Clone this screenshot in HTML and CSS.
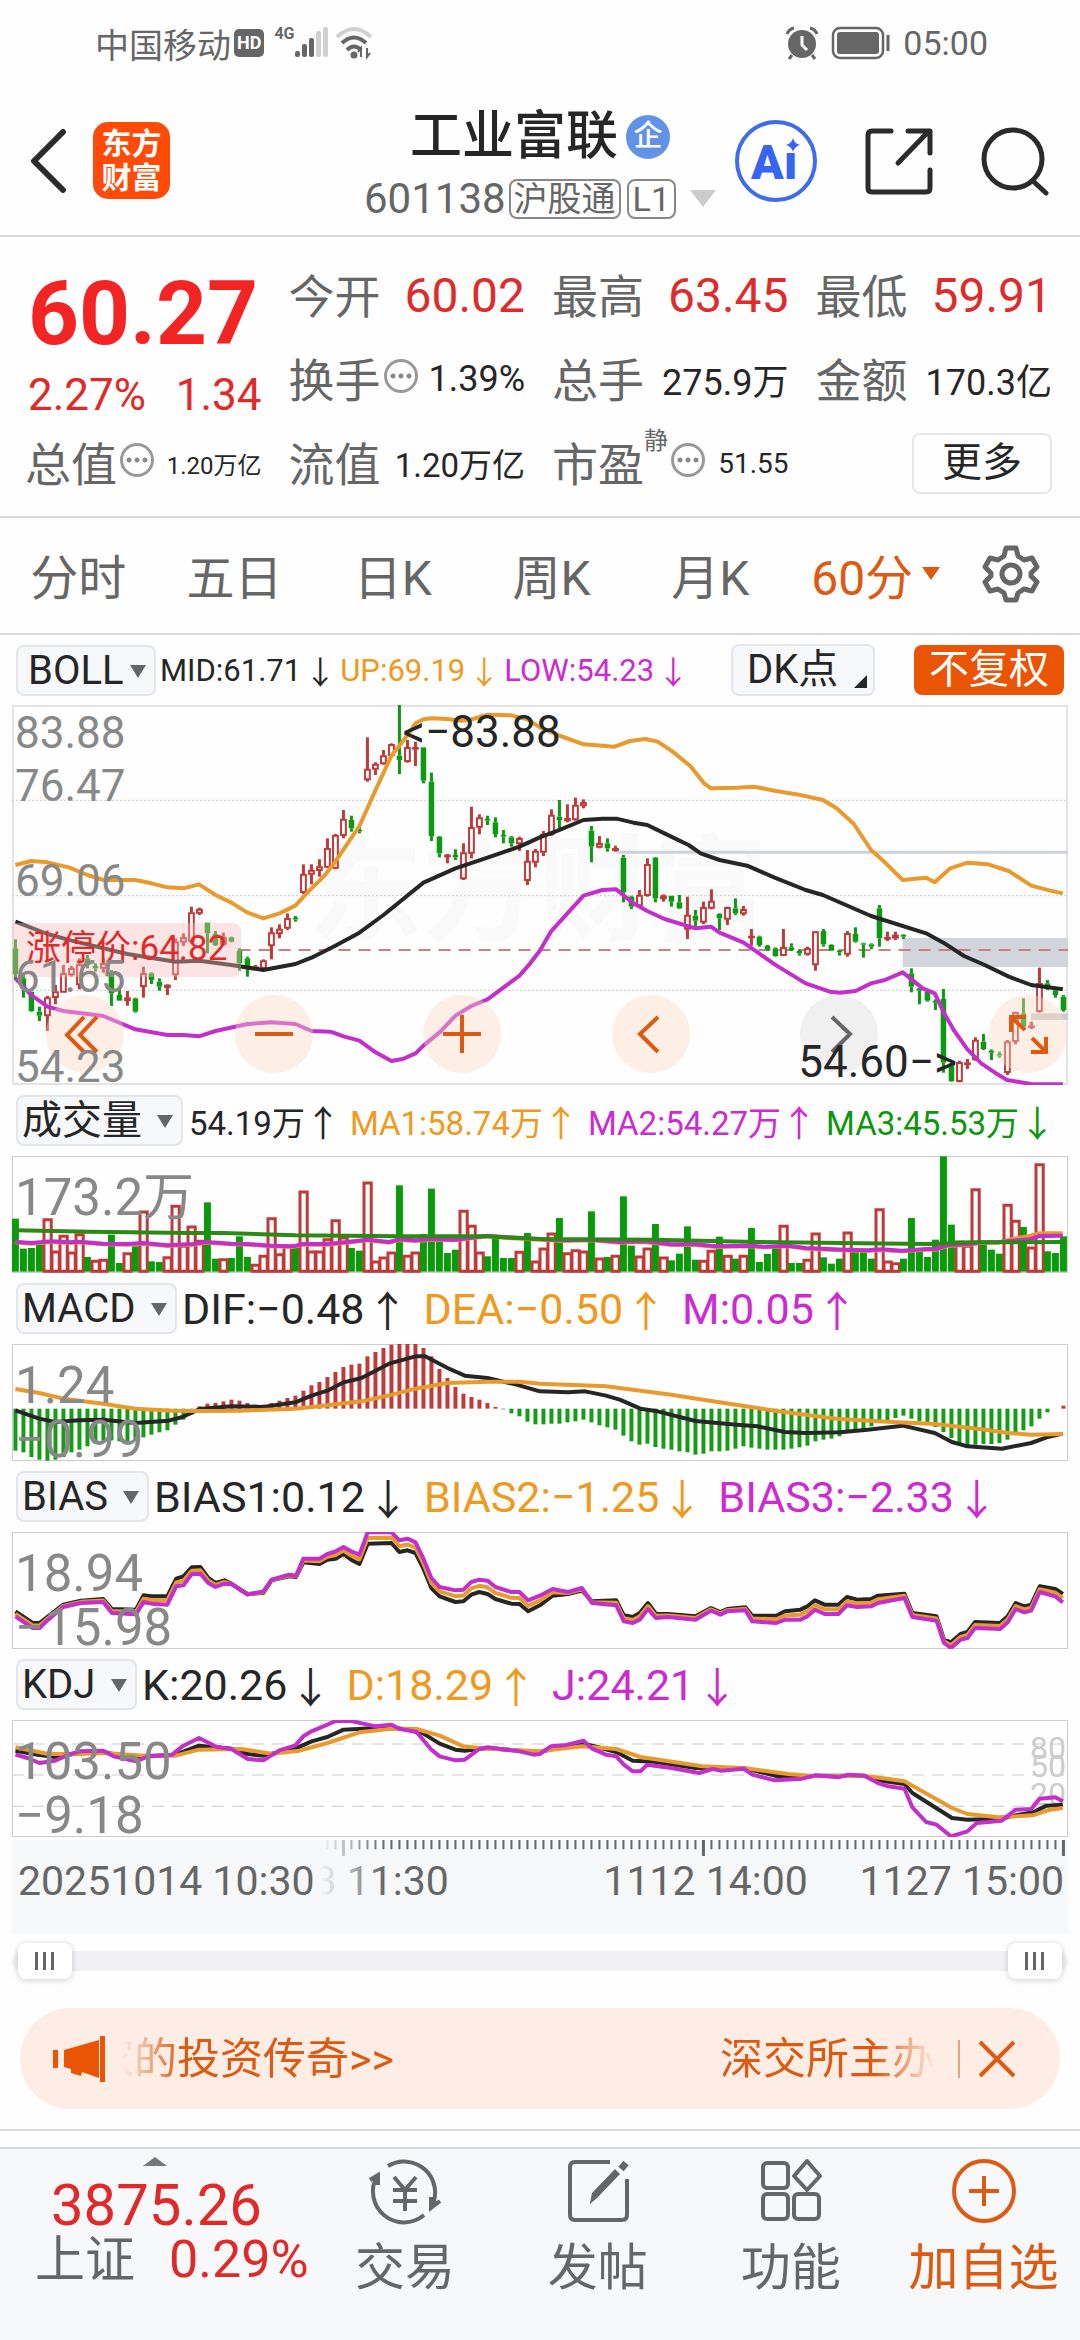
FILE: index.html
```html
<!DOCTYPE html>
<html lang="zh-CN">
<head>
<meta charset="utf-8">
<meta name="viewport" content="width=device-width, initial-scale=1">
<title>工业富联 601138</title>
<link rel="stylesheet" href="styles.css">
</head>
<body>
<div class="status">
  <div class="status-side">
    <span>中国移动</span>
    <span class="hd">HD</span>
    <span class="net">4G</span>
    <svg class="signal" width="34" height="36" viewBox="0 0 34 36"><g fill="#666"><rect x="0" y="26" width="5" height="6" rx="2"/><rect x="7" y="19" width="5" height="13" rx="2"/><rect x="14" y="13" width="5" height="19" rx="2"/></g><g fill="#d0d0d0"><rect x="21" y="6" width="5" height="26" rx="2"/><rect x="28" y="2" width="5" height="30" rx="2"/></g></svg>
    <svg width="38" height="34" viewBox="0 0 38 34" fill="none" stroke-width="4"><path d="M2 11Q19-5 36 11" stroke="#d0d0d0"/><path d="M7 17Q19 6 31 17" stroke="#666"/><path d="M12 24Q19 17 26 24" stroke="#666"/><circle cx="19" cy="29" r="3.500" fill="#666"/><path d="M26 31v-9l-3 4M32 22v9l3-4" stroke="#666" stroke-width="2"/></svg>
  </div>
  <div class="status-side">
    <svg width="34" height="34" viewBox="0 0 34 34"><circle cx="17" cy="18" r="14" fill="#666"/><path d="M2 8Q4 3 9 2M32 8Q30 3 25 2M7 29l-3 4M27 29l3 4" stroke="#666" stroke-width="3" fill="none"/><path d="M17 10v9l5 5" stroke="#fff" stroke-width="3" fill="none"/></svg>
    <svg class="battery" width="60" height="34" viewBox="0 0 60 34"><rect x="2" y="2" width="50" height="30" rx="7" fill="none" stroke="#666" stroke-width="2.500"/><rect x="6" y="6" width="42" height="22" rx="3" fill="#666"/><path d="M57 9v16" stroke="#666" stroke-width="3"/></svg>
    <span>05:00</span>
  </div>
</div>

<header class="top">
  <div class="top-left">
    <button class="icon-btn" aria-label="返回"><svg width="38" height="66" viewBox="0 0 38 66" fill="none" stroke="#2b2b2b" stroke-width="6" stroke-linecap="round" stroke-linejoin="round"><path d="M33 4L4 33l29 29"/></svg></button>
    <a class="logo" href="#home"><span>东方</span><span>财富</span></a>
  </div>
  <div class="titles">
    <h1>工业富联<span class="corp">企</span></h1>
    <div class="code"><span>601138</span><span class="tag">沪股通</span><span class="tag tag-level">L1</span><i class="caret"></i></div>
  </div>
  <div class="top-right">
    <button class="ai" aria-label="Ai">Aı<svg width="14" height="14" viewBox="0 0 14 14"><path d="M7 0Q8.500 5.500 14 7Q8.500 8.500 7 14Q5.500 8.500 0 7Q5.500 5.500 7 0Z" fill="#3864f4"/></svg></button>
    <button class="icon-btn" aria-label="分享"><svg width="68" height="68" viewBox="0 0 68 68" fill="none" stroke="#2b2b2b" stroke-width="5" stroke-linecap="round" stroke-linejoin="round"><path d="M26 4H7Q3 4 3 8V61Q3 65 7 65H61Q65 65 65 61V43M33 36L63 5M43 4H65V26"/></svg></button>
    <button class="icon-btn" aria-label="搜索"><svg width="68" height="70" viewBox="0 0 68 70" fill="none" stroke="#2b2b2b" stroke-width="5" stroke-linecap="round"><circle cx="32" cy="33" r="29"/><path d="M52 55L65 67"/></svg></button>
  </div>
</header>

<section class="quote">
  <div class="last">
    <strong>60.27</strong>
    <div><span>2.27%</span><span>1.34</span></div>
  </div>
  <div class="cell"><span>今开</span><b class="up">60.02</b></div>
  <div class="cell"><span>最高</span><b class="up">63.45</b></div>
  <div class="cell"><span>最低</span><b class="up">59.91</b></div>
  <div class="cell"><span>换手</span><i class="more-dot"></i><b>1.39%</b></div>
  <div class="cell"><span>总手</span><b>275.9万</b></div>
  <div class="cell"><span>金额</span><b>170.3亿</b></div>
  <div class="cell"><span>总值</span><i class="more-dot"></i><b class="tiny">1.20万亿</b></div>
  <div class="cell"><span>流值</span><b class="mid">1.20万亿</b></div>
  <div class="cell"><span>市盈</span><sup>静</sup><i class="more-dot"></i><b class="small">51.55</b></div>
  <div class="cell cell-end"><button class="more">更多</button></div>
</section>

<nav class="tabs">
  <button>分时</button><button>五日</button><button>日K</button><button>周K</button><button>月K</button>
  <button class="on">60分<i></i></button>
  <button class="icon-btn" aria-label="设置"><svg width="58" height="58" viewBox="0 0 58 58" fill="none" stroke="#666" stroke-width="5" stroke-linejoin="round"><path d="M24 3h10l2 8 6 4 8-2 5 9-6 6v3l6 6-5 9-8-2-6 4-2 7H24l-2-7-6-4-8 2-5-9 6-6v-3l-6-6 5-9 8 2 6-4Z"/><circle cx="29" cy="29" r="9"/></svg></button>
</nav>

<main>
  <div class="bar bar-main">
    <label class="pick pick-main"><select aria-label="主图指标"><option>BOLL</option></select></label>
    <span class="val">MID:61.71<i>↓</i></span>
    <span class="val c-or">UP:69.19<i>↓</i></span>
    <span class="val c-pu">LOW:54.23<i>↓</i></span>
    <button class="dk">DK点</button>
    <button class="adjust">不复权</button>
  </div>
  <div class="panel panel-main">
    <span class="watermark">东方财富</span>
    <svg class="plot" id="kline" viewBox="35 225 3067 1140" preserveAspectRatio="none"></svg>
    <span class="limit">涨停价:64.82</span>
    <div class="tools">
      <button aria-label="最早"><svg viewBox="0 0 78 78"><path d="M38 22L21 40l17 17M51 22L34 40l17 17"/></svg></button>
      <button aria-label="缩小"><svg viewBox="0 0 78 78"><path d="M20 39h38"/></svg></button>
      <button aria-label="放大"><svg viewBox="0 0 78 78"><path d="M20 39h38M39 20v38"/></svg></button>
      <button aria-label="向左"><svg viewBox="0 0 78 78"><path d="M46 22L28 39l18 18"/></svg></button>
      <button class="off" aria-label="向右"><svg viewBox="0 0 78 78"><path d="M32 22l18 17-18 18"/></svg></button>
      <button aria-label="全屏"><svg viewBox="0 0 78 78"><path d="M22 37V22h15M22 22l14 13M57 42v15H42M57 57L43 43"/></svg></button>
    </div>
    <span class="scale s1">83.88</span><span class="scale s2">76.47</span><span class="scale s3">69.06</span><span class="scale s4">61.65</span><span class="scale s5">54.23</span>
    <span class="mark mark-high">&lt;−83.88</span>
    <span class="mark mark-low">54.60−&gt;</span>
  </div>

  <div class="bar bar-vol">
    <label class="pick"><select aria-label="副图一"><option>成交量</option></select></label>
    <span class="val">54.19万<i>↑</i></span>
    <span class="val c-or">MA1:58.74万<i>↑</i></span>
    <span class="val c-pu">MA2:54.27万<i>↑</i></span>
    <span class="val c-gr">MA3:45.53万<i>↓</i></span>
  </div>
  <div class="panel">
    <svg class="plot" id="volume" viewBox="35 199 3067 351" preserveAspectRatio="none"></svg>
    <span class="scale big b1">173.2万</span>
  </div>

  <div class="bar">
    <label class="pick"><select aria-label="副图二"><option>MACD</option></select></label>
    <span class="val">DIF:−0.48<i>↑</i></span>
    <span class="val c-or">DEA:−0.50<i>↑</i></span>
    <span class="val c-pu">M:0.05<i>↑</i></span>
  </div>
  <div class="panel">
    <svg class="plot" id="macd" viewBox="35 763 3067 351" preserveAspectRatio="none"></svg>
    <span class="scale big b1">1.24</span><span class="scale big b2">−0.99</span>
  </div>

  <div class="bar">
    <label class="pick"><select aria-label="副图三"><option>BIAS</option></select></label>
    <span class="val">BIAS1:0.12<i>↓</i></span>
    <span class="val c-or">BIAS2:−1.25<i>↓</i></span>
    <span class="val c-pu">BIAS3:−2.33<i>↓</i></span>
  </div>
  <div class="panel">
    <svg class="plot" id="bias" viewBox="35 217 3067 351" preserveAspectRatio="none"></svg>
    <span class="scale big b1">18.94</span><span class="scale big b2">−15.98</span>
  </div>

  <div class="bar">
    <label class="pick"><select aria-label="副图四"><option>KDJ</option></select></label>
    <span class="val">K:20.26<i>↓</i></span>
    <span class="val c-or">D:18.29<i>↑</i></span>
    <span class="val c-pu">J:24.21<i>↓</i></span>
  </div>
  <div class="panel">
    <span class="level l1">80</span><span class="level l2">50</span><span class="level l3">20</span>
    <svg class="plot" id="kdj" viewBox="35 781 3067 351" preserveAspectRatio="none"></svg>
    <span class="scale big b1">103.50</span><span class="scale big b2">−9.18</span>
  </div>

  <div class="axis">
    <svg id="ticks" viewBox="35 0 3067 48" preserveAspectRatio="none"></svg>
    <span class="time t1">1023 11:30</span>
    <span class="time t2">1112 14:00</span>
    <span class="time t3">1127 15:00</span>
    <span class="time t0">20251014 10:30</span>
  </div>

  <div class="range">
    <input type="range" min="0" max="131" value="0" aria-label="起点">
    <input type="range" min="0" max="131" value="131" aria-label="终点">
  </div>
</main>

<aside class="notice">
  <svg width="54" height="46" viewBox="0 0 54 46" fill="#e95504"><path d="M0 14h5v18H0zM11 14L46 4V42L29 36 28 40 18 37 18 33 11 31ZM47 0h5v46h-5z"/></svg>
  <div class="ticker"><a href="#story">家的投资传奇&gt;&gt;</a><a href="#szse">深交所主办</a></div>
  <button aria-label="关闭"><svg width="38" height="38" viewBox="0 0 38 38" stroke="#dc5a12" stroke-width="4"><path d="M2 2l34 34M36 2L2 36"/></svg></button>
</aside>

<footer class="dock">
  <a class="index" href="#index">
    <i></i>
    <strong>3875.26</strong>
    <div><span>上证</span><b>0.29%</b></div>
  </a>
  <button><svg width="74" height="68" viewBox="0 0 74 68" fill="none" stroke="#666" stroke-width="4"><path d="M20 9A31 31 0 0 1 64 49M72 44L63 51V40M56 58A31 31 0 0 1 9 19M2 23L10 18V28"/><path d="M26 20l11 13 11-13M37 33v21M25 33h24M25 44h24"/></svg>交易</button>
  <button><svg width="64" height="68" viewBox="0 0 64 68" fill="none" stroke="#666" stroke-width="4"><path d="M44 5H9Q4 5 4 10V58Q4 63 9 63H56Q61 63 61 58V22"/><path d="M24 46l2-10 23-24 5 5-23 24-7 6Z" fill="#666" stroke="none"/><path d="M55 12l5-6" stroke-width="7"/></svg>发帖</button>
  <button><svg width="64" height="68" viewBox="0 0 64 68" fill="none" stroke="#666" stroke-width="4" stroke-linejoin="round"><rect x="4" y="6" width="25" height="25" rx="4"/><rect x="4" y="37" width="25" height="25" rx="4"/><rect x="35" y="37" width="25" height="25" rx="4"/><path d="M48 4L61 19 48 33 35 19Z"/></svg>功能</button>
  <button class="hot"><svg width="66" height="68" viewBox="0 0 66 68" fill="none" stroke="#dc5a12" stroke-width="4"><circle cx="33" cy="34" r="30"/><path d="M18 34h30M33 19v30"/></svg>加自选</button>
</footer>
<script src="charts.js"></script>
</body>
</html>
```

FILE: styles.css
```css
* { box-sizing: border-box; }
body {
  margin: 0;
  background: #fefefe;
  color: #262626;
  font-family: Roboto, "Noto Sans CJK SC", sans-serif;
  font-size: 40px;
}
button, select, input { font: inherit; color: inherit; margin: 0; padding: 0; border: 0; background: none; }
a { color: inherit; text-decoration: none; }
i { font-style: normal; }
b { font-weight: 400; }
svg { display: block; flex: none; }

.status { display: flex; justify-content: space-between; height: 86px; padding: 0 92px 0 95px; color: #666; font-size: 34px; }
.status-side { display: flex; align-items: center; }
.hd { margin-left: 3px; padding: 0 3px; border-radius: 5px; background: #666; color: #fff; font-size: 18px; font-weight: 700; line-height: 28px; }
.net { align-self: flex-start; margin: 24px 0 0 10px; font-size: 16px; font-weight: 700; }
.signal { margin-right: 6px; }
.battery { margin: 0 12px; }

.top { display: grid; grid-template-columns: 1fr auto 1fr; align-items: center; height: 151px; border-bottom: 2px solid #d9d9dc; }
.top-left { display: flex; align-items: center; gap: 25px; padding-left: 30px; }
.icon-btn { display: flex; }
.logo { display: flex; flex-direction: column; align-items: center; justify-content: center; width: 77px; height: 77px; border-radius: 15px; background: #ff4a08; color: #fff; font-size: 30px; font-weight: 700; line-height: 34px; }
.titles { display: flex; flex-direction: column; align-items: center; padding-top: 12px; }
h1 { display: flex; align-items: center; gap: 8px; margin: 0; font-size: 52px; font-weight: 500; line-height: 64px; }
.corp { width: 44px; height: 44px; border-radius: 50%; background: #6292e6; color: #fff; font-size: 29px; line-height: 42px; text-align: center; }
.code { display: flex; align-items: center; height: 60px; color: #666; font-size: 42px; }
.tag { margin-left: 3px; padding: 0 3px; border: 2px solid #888; border-radius: 8px; font-size: 34px; line-height: 36px; }
.tag-level { margin-left: 6px; padding: 0 4px; }
.caret { margin-left: 14px; border: 13px solid transparent; border-top: 17px solid #ccc; border-bottom: 0; }
.top-right { display: flex; align-items: center; justify-content: flex-end; gap: 48px; padding-right: 31px; }
.ai { position: relative; width: 82px; height: 82px; padding: 4px 0 0 12px; border: 4px solid #3f6cea; border-radius: 50%; color: #3864f4; font-size: 48px; font-weight: 900; line-height: 66px; text-align: left; }
.ai svg { position: absolute; top: 14px; right: 13px; }

.quote { display: grid; grid-template-columns: repeat(4, 1fr); grid-auto-rows: 84px; column-gap: 30px; height: 281px; padding: 16px 28px 0; border-bottom: 2px solid #d9d9dc; }
.last { grid-row: span 2; padding-top: 10px; color: #e02a2a; font-size: 44px; line-height: 60px; }
.last strong { display: block; color: #f22424; font-size: 89px; line-height: 102px; }
.last div { display: flex; justify-content: space-between; }
.cell { display: flex; align-items: center; color: #666; font-size: 46px; }
.cell > span { margin: 0 0 4px -3px; }
.cell b { margin-left: auto; color: #262626; font-size: 36px; }
.cell .up { color: #dc2c2c; font-size: 48px; }
.cell .mid { font-size: 33px; }
.cell .small { font-size: 28px; }
.cell .tiny { font-size: 24px; }
.cell sup { align-self: flex-start; padding-top: 6px; font-size: 24px; line-height: 28px; }
.cell-end { justify-content: flex-end; }
.more-dot { width: 34px; height: 34px; margin: 0 0 6px 3px; border: 3px solid #999; border-radius: 50%; background: radial-gradient(circle, #888 2px, transparent 3px) center / 8px 8px content-box; background-repeat: repeat-x; padding: 10px 2px; }
.more { width: 140px; height: 61px; border: 2px solid #e6e6e6; border-radius: 8px; color: #262626; font-size: 40px; line-height: 56px; }

.tabs { display: grid; grid-template-columns: 156fr 156fr 160fr 157fr 160fr 170fr 100fr; align-items: center; justify-items: center; height: 117px; padding: 0 19px 4px 0; border-bottom: 2px solid #d9d9dc; color: #666; font-size: 48px; }
.tabs .on { display: flex; align-items: center; color: #dc5a12; }
.on i { margin-left: 9px; border: 9px solid transparent; border-top: 13px solid #dc5a12; border-bottom: 0; }

main { padding: 0 12px; }
.bar { display: flex; align-items: center; gap: 15px; height: 71px; padding: 0 4px; font-size: 43px; white-space: nowrap; }
.bar .pick { margin-right: -10px; }
.val { display: flex; align-items: center; }
.val i { margin-left: 2px; font-family: "Noto Sans CJK SC", sans-serif; font-size: 42px; line-height: 50px; }
.bar-vol { gap: 9px; font-size: 33px; }
.bar-vol .pick { margin-right: -3px; }
.bar-vol i { margin-left: 0; font-size: 36px; }
.bar-main { gap: 4px; height: 70px; font-size: 31px; }
.bar-main .pick { margin-right: 0; }
.bar-main i { margin-left: 3px; font-size: 32px; }
.c-or { color: #ee9a20; }
.c-pu { color: #cc2bd2; }
.c-gr { color: #0c960c; }
.pick { position: relative; height: 51px; border: 2px solid #e3e5ea; border-radius: 8px; background: #f7f8fa; font-size: 40px; }
.pick::after { content: ""; position: absolute; right: 8px; top: 18px; border: 8px solid transparent; border-top: 13px solid #666; border-bottom: 0; pointer-events: none; }
.pick select { display: block; height: 47px; padding: 0 39px 0 4px; appearance: none; }
.pick-main select { padding: 0 30px 0 10px; }
.dk { position: relative; width: 144px; height: 52px; margin-left: auto; padding: 0 0 0 14px; border: 2px solid #e3e5ea; border-radius: 8px; background: #f7f8fa; font-size: 40px; line-height: 46px; text-align: left; }
.dk::after { content: ""; position: absolute; right: 6px; bottom: 6px; border-left: 13px solid transparent; border-bottom: 13px solid #262626; }
.adjust { width: 150px; height: 50px; margin-left: 35px; border-radius: 8px; background: #e95504; color: #fff; font-size: 40px; line-height: 48px; }

.panel { position: relative; height: 117px; box-shadow: inset 0 0 0 1px #ccc; }
.panel-main { height: 380px; box-shadow: inset 0 0 0 2px #e3e3e3; }
.plot { position: relative; width: 100%; height: 100%; }
.plot *, #ticks * { vector-effect: non-scaling-stroke; }
.plot polyline { fill: none; stroke-width: 4px; stroke-linejoin: round; }
.watermark { position: absolute; left: 28%; top: 112px; color: #f9f9fa; font-size: 115px; font-weight: 700; line-height: 150px; }
.scale { position: absolute; left: 3px; color: #888; font-size: 44px; line-height: 44px; }
.s1 { top: 6px; }
.s2 { top: 59px; }
.s3 { top: 154px; }
.s4 { top: 250px; }
.s5 { top: 340px; }
.big { font-size: 51px; line-height: 50px; }
.b1 { top: 17px; }
.b2 { top: 71px; }
.limit { position: absolute; left: 0; top: 218px; height: 54px; padding: 0 14px; border-radius: 0 8px 8px 0; background: rgba(250, 190, 190, .4); color: #e02a2a; font-size: 35px; line-height: 52px; }
.tools { position: absolute; left: 34px; right: 1px; top: 290px; display: flex; justify-content: space-between; }
.tools button { width: 78px; height: 78px; border-radius: 50%; background: rgba(253, 215, 195, .4); }
.tools svg { fill: none; stroke: #dc5a12; stroke-width: 4; }
.tools .off { background: rgba(220, 220, 220, .4); }
.off svg { stroke: #666; }
.mark { position: absolute; font-size: 44px; line-height: 50px; }
.mark-high { left: 37%; top: 2px; }
.mark-low { right: 111px; top: 332px; }
.level { position: absolute; right: 2px; color: #ccc; font-size: 32px; line-height: 32px; }
.l1 { top: 12px; }
.l2 { top: 30px; }
.l3 { top: 58px; }

.axis { position: relative; height: 94px; margin-top: 3px; background: #f7f8fa; color: #666; font-size: 41px; line-height: 50px; white-space: nowrap; }
#ticks { width: 100%; height: 16px; }
.time { position: absolute; top: 16px; }
.t0 { left: 0; top: 0; height: 94px; padding: 16px 70px 0 6px; background: linear-gradient(to left, rgba(247, 248, 250, 0), #f7f8fa 66px); }
.t1 { left: 22%; }
.t2 { left: 56%; }
.t3 { right: 4px; }

.range { position: relative; height: 20px; margin: 17px 0 37px; border-radius: 10px; background: #f1f1f4; }
.range input { position: absolute; left: 6px; top: -8px; width: calc(100% - 12px); height: 36px; appearance: none; background: none; pointer-events: none; }
.range input::-webkit-slider-thumb { appearance: none; width: 54px; height: 36px; border-radius: 8px; pointer-events: auto; box-shadow: 0 1px 6px rgba(0, 0, 0, .2); background: linear-gradient(90deg, #666 3px, transparent 3px) 0 0 / 8px 18px repeat-x content-box, #fff; padding: 9px 17px; }

.notice { display: flex; align-items: center; height: 101px; margin: 0 20px 20px; padding: 0 44px 0 33px; border-radius: 51px; background: #fdede4; color: #dc5a12; font-size: 43px; }
.ticker { display: flex; flex: 1; justify-content: space-between; overflow: hidden; margin: 0 23px 0 15px; line-height: 60px; white-space: nowrap; -webkit-mask: linear-gradient(90deg, transparent, #000 60px, #000 calc(100% - 60px), transparent); mask: linear-gradient(90deg, transparent, #000 60px, #000 calc(100% - 60px), transparent); }
.ticker a:first-child { margin-left: -31px; }
.notice button { padding-left: 18px; border-left: 2px solid #e8a37e; }

.dock { display: grid; grid-template-columns: 308fr 193fr 193fr 193fr 193fr; height: 211px; border-top: 2px solid #d9d9dc; background: linear-gradient(#fefefe 16px, #d9d9dc 16px, #d9d9dc 18px, #f7f8fa 18px); color: #666; font-size: 50px; white-space: nowrap; }
.dock > * { padding-top: 26px; }
.dock button { display: flex; flex-direction: column; align-items: center; line-height: 74px; padding-bottom: 30px; gap: 6px; }
.dock .hot { color: #dc5a12; }
.index { display: flex; flex-direction: column; padding-left: 35px; }
.index i { align-self: flex-start; margin-left: 108px; border: 12px solid transparent; border-top: 0; border-bottom: 9px solid #777; }
.index strong { padding-left: 16px; color: #e02a2a; font-size: 58px; font-weight: 400; line-height: 78px; }
.index div { display: flex; align-items: center; gap: 34px; line-height: 32px; }
.index b { color: #e02a2a; font-size: 52px; }
```

FILE: charts.js
```js
const NS = 'http://www.w3.org/2000/svg';
const RED = '#c03a3a', GREEN = '#0c9a12';
const BLACK = '#262626', ORANGE = '#e89a2c', PURPLE = '#c22fcb';
const at = i => 45 + 23.235 * i;

function add(id, name, attrs) {
  const el = document.createElementNS(NS, name);
  for (const k in attrs) el.setAttribute(k, attrs[k]);
  document.getElementById(id).appendChild(el);
}
const vline = (id, x, y1, y2, stroke, w) => add(id, 'line', { x1: x, x2: x, y1, y2, stroke, 'stroke-width': w });
const hline = (id, x1, x2, y, stroke, w, dash) => add(id, 'line', { x1, x2, y1: y, y2: y, stroke, 'stroke-width': w, 'stroke-dasharray': dash || 'none' });
const curve = (id, points, stroke) => add(id, 'polyline', { points, stroke });

/* candles: colour, body top, body bottom, high, low */
const candles = `g955,1032,928,1050 g1045,1075,1030,1103 g1085,1143,1085,1145 g1145,1157,1130,1173 r1103,1158,1098,1203 r1085,1103,1065,1123 r1030,1087,1005,1087 r1015,1035,1008,1040 r1003,1065,985,1078 g985,1005,975,1015
g1008,1015,1000,1025 r1000,1015,985,1028 g1025,1090,1020,1128 g1095,1112,1070,1112 r1103,1112,1083,1127 g1105,1145,1103,1148 r1030,1070,1010,1103 g1030,1050,1027,1062 g1055,1070,1045,1082 r1065,1073,1063,1095
r935,1035,925,1050 r922,937,910,948 r848,935,830,940 r837,850,833,855 g878,910,878,970 g912,945,903,948 r922,943,908,948 g922,935,920,937 g962,1000,955,1022 g985,1010,980,1040
r1010,1015,1005,1018 r992,1015,988,1020 r908,948,892,988 r897,912,883,925 r865,895,850,900 g864,868,858,875 r732,788,703,792 r720,733,703,763 r710,722,688,740 r655,712,625,714
r615,715,612,718 r567,617,540,625 g570,595,557,605 g600,604,590,610 r417,450,322,455 r402,418,397,435 r377,402,360,404 r343,377,340,383 g377,390,225,432 r352,395,330,398
r352,355,335,408 g352,452,352,460 g455,618,428,633 g620,670,618,682 r675,680,672,700 g675,682,658,690 r668,747,640,750 r592,670,530,685 r563,592,553,613 g567,572,557,585
g577,612,562,622 g615,620,600,640 g622,640,618,650 r625,642,620,663 r693,752,660,765 r663,697,657,712 r612,667,603,678 r555,613,538,618 g560,570,510,595 r565,573,523,577
r525,570,503,572 r517,528,508,535 g602,650,588,697 r640,652,618,655 g640,655,625,665 r655,662,647,665 g683,787,675,817 g800,830,797,837 r795,828,780,832 r703,797,685,800
g683,805,681,817 r797,807,793,815 g798,815,797,830 g817,835,795,837 r855,898,800,927 g857,872,840,890 r832,877,815,882 r813,835,778,838 g852,865,850,900 r832,868,830,885
g835,850,805,855 r838,852,828,857 r918,923,897,947 g920,945,917,950 g948,958,945,963 g955,978,952,980 r952,977,897,978 g952,960,940,963 g963,970,958,977 r955,973,950,977
r905,1005,903,1022 g903,943,897,950 g945,962,943,963 g963,967,960,977 r910,973,903,980 g912,935,892,938 g940,944,938,983 g943,950,940,957 g835,925,825,950 r922,927,905,933
r915,925,905,930 g915,920,913,927 g1030,1070,1015,1087 g1075,1082,1073,1123 g1085,1112,1083,1115 g1113,1118,1108,1140 g1107,1298,1077,1328 g1300,1353,1298,1355 r1297,1355,1292,1357 r1298,1303,1287,1317
r1230,1290,1222,1292 g1235,1257,1212,1260 g1262,1268,1258,1290 g1272,1276,1265,1283 r1235,1328,1230,1335 r1147,1235,1145,1243 g1150,1190,1105,1197 r1187,1193,1175,1197 r1060,1145,1013,1148 g1060,1072,1050,1080
g1082,1095,1078,1103 g1100,1140,1095,1145`.split(/\s+/);

[511, 797, 1081].forEach(y => hline('kline', 35, 3102, y, '#ccc', 1, '2 2'));
hline('kline', 1790, 3102, 667, '#ccd2d8', 3);
add('kline', 'rect', { x: 2622, y: 924, width: 480, height: 87, fill: '#d2d5dc' });
add('kline', 'rect', { x: 2994, y: 1150, width: 108, height: 20, fill: '#ccc' });
hline('kline', 693, 3102, 960, '#c98080', 2, '12 8');
candles.forEach((c, i) => {
  const col = c[0] === 'r' ? RED : GREEN;
  const [top, bottom, high, low] = c.slice(1).split(',').map(Number);
  const x = at(i);
  vline('kline', x, high, top, col, 3);
  vline('kline', x, bottom, low, col, 3);
  if (c[0] === 'g') add('kline', 'rect', { x: x - 8, y: top, width: 16, height: bottom - top, fill: col });
  else add('kline', 'rect', { x: x - 7, y: top + 2, width: 14, height: Math.max(bottom - top - 4, 2), fill: '#fff', stroke: col, 'stroke-width': 2 });
});
curve('kline', '45,705 91,693 138,697 200,712 254,735 300,750 393,750 440,760 486,772 533,775 578,763 626,795 672,818 719,848 765,865 812,850 858,827 900,780 940,740 974,695 1044,588 1091,480 1137,377 1184,315 1207,280 1230,268 1253,265 1300,267 1340,272 1370,268 1416,254 1485,256 1532,268 1568,292 1628,318 1695,343 1785,350 1830,333 1875,327 1910,335 1950,362 2005,408 2045,460 2065,475 2140,473 2190,470 2250,482 2320,494 2390,510 2430,535 2480,582 2530,660 2570,697 2622,750 2690,743 2715,757 2760,715 2810,698 2870,703 2930,723 2995,767 3050,782 3087,790', ORANGE);
curve('kline', '45,875 138,912 208,932 370,972 510,995 580,992 672,1005 765,1020 858,1002 905,983 974,947 1044,908 1114,855 1230,758 1323,715 1416,683 1509,650 1568,622 1620,602 1695,570 1750,566 1790,566 1840,578 1880,585 1930,610 2000,645 2035,670 2090,690 2170,707 2250,743 2340,780 2390,795 2530,858 2690,910 2740,938 2800,978 2860,1005 2930,1040 2995,1065 3087,1078', BLACK);
curve('kline', '45,1045 91,1095 138,1130 184,1143 300,1158 393,1198 486,1215 533,1215 578,1219 626,1203 719,1182 789,1177 858,1182 905,1203 960,1205 1000,1220 1044,1232 1091,1267 1137,1293 1170,1287 1207,1270 1230,1247 1277,1207 1323,1157 1369,1128 1416,1108 1462,1073 1509,1037 1540,1000 1568,962 1600,905 1695,797 1750,780 1790,778 1840,820 1880,843 1930,867 2020,895 2065,890 2090,908 2160,938 2250,1003 2340,1060 2410,1085 2440,1088 2485,1083 2530,1060 2570,1050 2622,1027 2680,1075 2715,1090 2740,1145 2770,1200 2810,1258 2850,1300 2890,1328 2925,1350 2995,1362 3087,1363', PURPLE);

/* volume: colour, bar top */
'g387 g477 g475 g465 r390 r487 r440 r490 r435 g502 r515 r512 g435 g520 r492 g470 r367 g515 g517 r504 r350 r470 r412 r455 g338 g507 r510 g505 g440 g502 r527 r500 r387 r495 r470 g475 r307 r487 r487 r450 r393 r445 g475 g483 r280 r517 r505 r490 g287 r500 r490 g433 g297 g455 g490 g480 r365 r410 r490 g500 g448 g505 g505 r488 g430 r517 r478 r433 g385 r492 r483 r487 g365 r508 g502 r500 g320 g468 r502 r478 g403 r505 g512 g492 g410 g510 r515 r485 g441 r500 g507 r500 g415 g517 g493 g475 r410 g520 g520 r512 r433 g503 g522 g507 r430 g485 g487 g507 r360 r517 r522 g507 g385 g485 g502 g450 g200 g405 r457 r470 r300 g460 g480 g492 r347 r395 g412 r475 r225 g485 g490 g440'.split(' ').forEach((v, i) => {
  const top = +v.slice(1), x = at(i);
  if (v[0] === 'g') add('volume', 'rect', { x: x - 10, y: top, width: 20, height: 546 - top, fill: '#089c08' });
  else add('volume', 'rect', { x: x - 10, y: top, width: 21, height: 545 - top, fill: '#fff', stroke: RED, 'stroke-width': 3 });
});
const ma = '45,456 91,460 150,455 200,458 231,456 300,462 370,463 417,460 486,467 560,463 600,457 672,462 719,463 789,468 850,470 881,463 951,463 1000,458 1068,450 1130,457 1160,449 1207,452 1253,448 1323,450 1416,438 1460,442 1568,448 1630,452 1720,450 1800,457 1870,455 1950,464 2020,464 2080,470 2180,468 2220,471 2290,468 2340,475 2450,480 2520,482 2560,479 2620,483 2690,478 2720,478 2750,467 2810,464 2850,458 2900,457 ';
curve('volume', ma.replace(/,(\d+)/g, (m, y) => ',' + (+y + 2)) + '2940,448 2990,439 3015,431 3087,431', ORANGE);
curve('volume', ma + '2990,449 3020,439 3087,438', PURPLE);
curve('volume', '45,422 260,426 550,430 650,430 858,437 1160,440 1416,440 1568,448 1900,450 2200,457 2500,461 2700,463 2820,458 3087,457', '#2a8a14');

/* MACD histogram around the zero line at 957 */
[1083,1088,1102,1110,1113,1110,1102,1088,1080,1070,1062,1058,1052,1055,1055,1050,1043,1035,1028,1022,1005,990,975,950,942,940,935,930,933,940,945,945,940,933,925,918,903,887,877,862,847,832,825,822,800,787,775,765,763,763,763,775,800,838,865,892,912,922,930,940,952,959,971,980,996,1004,1004,1002,1002,998,995,990,998,1007,1013,1020,1038,1055,1065,1062,1072,1077,1080,1085,1088,1095,1092,1085,1085,1083,1077,1070,1074,1077,1080,1080,1080,1077,1073,1068,1055,1050,1047,1040,1030,1025,1020,1010,1000,995,985,978,987,995,1002,1012,1027,1045,1060,1068,1065,1063,1063,1060,1050,1035,1022,1010,987,968,957,948]
  .forEach((y, i) => vline('macd', at(i), 957, y, y < 957 ? RED : '#189b18', 4));
curve('macd', '45,962 114,987 160,997 231,992 300,990 393,1000 490,993 530,982 580,958 672,950 765,952 858,938 905,918 951,903 998,878 1050,865 1091,843 1130,822 1207,800 1235,800 1300,835 1350,858 1416,865 1500,885 1568,905 1650,908 1700,905 1760,918 1800,930 1860,957 1910,965 2020,994 2060,998 2140,1005 2200,1010 2280,1027 2340,1030 2440,1028 2520,1020 2622,1008 2715,1030 2765,1057 2810,1070 2910,1077 2995,1060 3040,1043 3087,1032', BLACK);
curve('macd', '45,898 114,910 184,927 300,942 393,957 500,963 578,964 700,963 858,957 951,947 1050,935 1130,917 1207,897 1300,880 1416,876 1510,876 1568,882 1760,890 1950,915 2070,935 2200,955 2250,963 2430,987 2550,995 2715,1003 2850,1019 2930,1030 2995,1035 3087,1033', ORANGE);

/* BIAS: x, short period, long period; the middle period runs between them */
const bias = '45,455,470 95,490,505 115,490,505 140,470,480 184,435,442 235,423,430 300,418,427 325,448,460 395,450,464 417,407,427 440,410,432 486,410,435 512,357,380 533,350,377 557,323,343 582,322,342 605,355,370 626,370,382 652,362,372 672,372,373 719,403,405 765,400,395 789,362,360 840,350,345 860,352,348 881,308,297 928,313,297 951,300,283 975,297,275 998,283,262 1020,300,275 1044,313,285 1068,252,218 1137,250,218 1160,277,242 1184,272,237 1207,280,248 1230,327,297 1253,385,355 1277,410,382 1323,427,392 1346,425,390 1369,405,367 1392,397,360 1416,403,363 1439,418,382 1485,432,397 1509,433,397 1534,455,422 1568,437,408 1605,408,388 1650,403,397 1690,393,385 1720,425,430 1790,422,437 1812,467,485 1838,472,490 1858,460,480 1882,430,448 1905,462,475 1940,463,472 2020,470,480 2065,445,453 2092,457,465 2112,448,455 2165,443,452 2185,468,485 2255,468,490 2280,455,480 2325,450,480 2345,440,470 2367,422,450 2395,435,463 2435,435,463 2460,412,437 2490,420,442 2530,418,440 2550,408,430 2627,402,415 2650,460,472 2720,470,483 2742,540,550 2762,548,565 2790,523,540 2810,517,535 2832,487,505 2905,490,508 2927,470,488 2950,430,448 2975,440,458 2995,435,453 3020,380,397 3065,388,410 3087,403,428'.split(' ').map(p => p.split(',').map(Number));
curve('bias', bias.map(p => [p[0], p[1]]).join(' '), BLACK);
curve('bias', bias.map(p => [p[0], (p[1] + p[2]) / 2]).join(' '), ORANGE);
curve('bias', bias.map(p => [p[0], p[2]]).join(' '), PURPLE);

[853, 946, 1040].forEach(y => hline('kdj', 35, 3102, y, '#ccc', 1, '12 8'));
curve('kdj', '45,873 110,885 160,892 231,880 300,877 340,885 400,892 510,885 578,858 626,863 672,867 719,883 765,888 812,877 858,867 905,845 951,832 998,810 1137,803 1184,810 1230,822 1277,852 1323,870 1350,873 1416,865 1509,873 1568,877 1610,867 1700,853 1790,877 1838,903 1900,906 2020,925 2160,925 2250,948 2320,955 2370,948 2450,948 2510,948 2560,963 2627,973 2650,1000 2765,1075 2810,1080 2910,1077 2950,1067 3000,1058 3040,1038 3087,1035', BLACK);
curve('kdj', '45,863 140,883 231,883 300,880 400,887 510,888 578,870 700,868 789,882 870,873 951,850 1044,818 1137,807 1210,808 1277,828 1346,860 1416,867 1568,875 1690,860 1790,868 1860,892 2040,920 2160,925 2290,943 2370,950 2500,948 2560,955 2627,965 2765,1045 2810,1063 2900,1073 3000,1067 3050,1050 3087,1045', ORANGE);
curve('kdj', '45,885 80,895 115,910 160,903 205,883 231,875 300,873 330,890 395,905 430,890 500,885 530,860 578,835 630,862 672,868 720,898 765,902 812,872 858,857 881,830 905,815 951,795 975,784 1020,784 1091,800 1137,795 1160,807 1210,817 1253,870 1277,890 1323,902 1350,900 1392,868 1416,863 1509,875 1550,885 1568,883 1600,860 1640,857 1695,843 1720,867 1760,885 1790,890 1812,915 1838,935 1860,935 1880,915 1950,925 2030,940 2070,928 2095,933 2160,927 2185,945 2250,962 2330,957 2367,947 2435,953 2465,945 2510,948 2550,970 2580,980 2627,987 2650,1043 2690,1087 2720,1095 2762,1130 2810,1115 2837,1090 2910,1083 2950,1050 2995,1048 3020,1017 3065,1013 3087,1025', PURPLE);

for (let i = 0; i < 132; i++) {
  const major = i === 41 || i === 86 || i === 131;
  vline('ticks', at(i), 0, major ? 48 : 28, '#666', major ? 3 : 2);
}
```
